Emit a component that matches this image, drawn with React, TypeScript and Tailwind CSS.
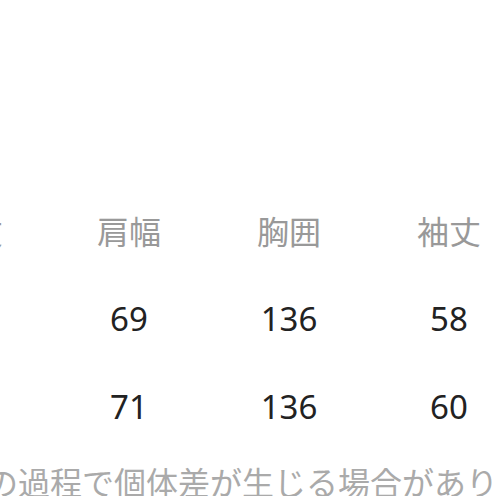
const columns = [
  { label: "着丈", values: ["72", "74"] },
  { label: "肩幅", values: ["69", "71"] },
  { label: "胸囲", values: ["136", "136"] },
  { label: "袖丈", values: ["58", "60"] },
];

export default function App() {
  return (
    <div
      className="w-[496px] h-[496px] overflow-hidden bg-white"
      style={{ fontFamily: '"Noto Sans CJK JP", "Noto Sans", sans-serif' }}
    >
      <div className="pt-[186px] ml-[-111px] grid grid-cols-[160px_160px_160px_160px] w-[640px]">
        {columns.map((col, i) => (
          <div
            key={col.label}
            className={`flex flex-col ${i === 0 ? "items-end pr-[46px]" : "items-center"}`}
          >
            <div className="h-[88px] flex items-center text-[32px] text-[#999999]">{col.label}</div>
            {col.values.map((v, j) => (
              <div
                key={j}
                className={`${j === 0 ? "h-[89px]" : "h-[88px]"} flex items-center text-[33px] text-[#222222] ${i === 0 ? "pr-[4px]" : ""}`}
                style={{ fontFamily: '"Noto Sans", "Open Sans", sans-serif' }}
              >
                {v}
              </div>
            ))}
          </div>
        ))}
      </div>
      <div className="ml-[-78px] mt-[5px] h-[50px] flex items-center whitespace-nowrap text-[32px] text-[#aaaaaa]">
        製造の過程で個体差が生じる場合があります。
      </div>
    </div>
  );
}
